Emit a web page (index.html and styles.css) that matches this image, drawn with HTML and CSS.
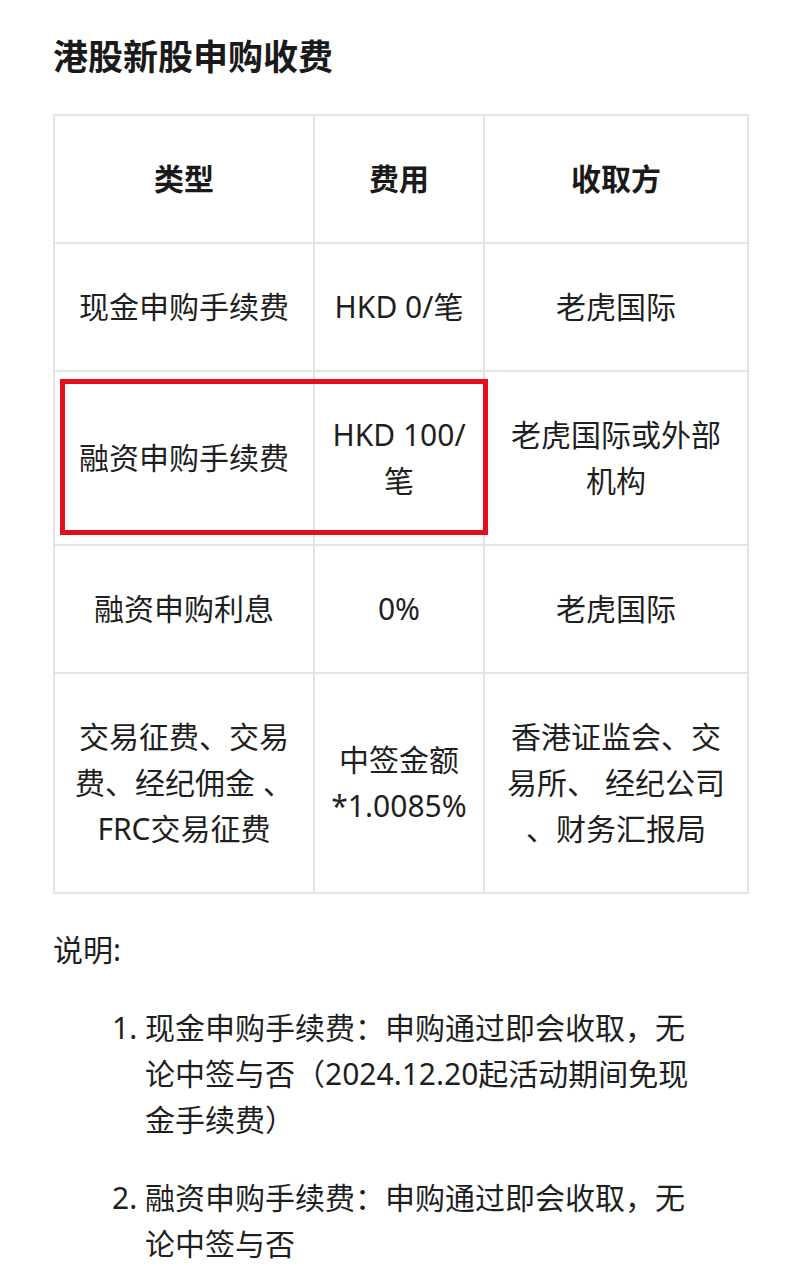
FILE: index.html
```html
<!DOCTYPE html>
<html lang="zh-CN">
<head>
  <meta charset="UTF-8">
  <meta name="viewport" content="width=device-width, initial-scale=1.0">
  <title>港股新股申购收费</title>
  <link rel="stylesheet" href="styles.css">
</head>
<body>
  <div class="page">
    <h1 class="title">港股新股申购收费</h1>

    <div class="table-wrap">
      <table class="fee-table">
        <colgroup>
          <col class="col-type">
          <col class="col-fee">
          <col class="col-payee">
        </colgroup>
        <thead>
          <tr>
            <th>类型</th>
            <th>费用</th>
            <th>收取方</th>
          </tr>
        </thead>
        <tbody>
          <tr>
            <td>现金申购手续费</td>
            <td>HKD 0/笔</td>
            <td>老虎国际</td>
          </tr>
          <tr>
            <td>融资申购手续费</td>
            <td>HKD 100/笔</td>
            <td>老虎国际或外部机构</td>
          </tr>
          <tr>
            <td>融资申购利息</td>
            <td>0%</td>
            <td>老虎国际</td>
          </tr>
          <tr>
            <td>交易征费、交易费、经纪佣金 、FRC交易征费</td>
            <td>中签金额 *1.0085%</td>
            <td class="wrap-any">香港证监会、交易所、 经纪公司 、财务汇报局</td>
          </tr>
        </tbody>
      </table>
      <!-- red annotation box drawn over the financing row -->
      <div class="highlight"></div>
    </div>

    <p class="note-title">说明:</p>
    <ol class="notes">
      <li>现金申购手续费：申购通过即会收取，无论中签与否（2024.12.20起活动期间免现金手续费）</li>
      <li>融资申购手续费：申购通过即会收取，无论中签与否</li>
    </ol>
  </div>
</body>
</html>
```

FILE: styles.css
```css
body {
  margin: 0;
  padding: 0;
  font-family: "Noto Sans", "Noto Sans CJK SC", sans-serif;
  background-color: #fff;
  color: #1f1f1f;
}

.page {
  padding: 34px 53px 0 53px;
}

.title {
  margin: 0;
  font-size: 35px;
  line-height: 46px;
  font-weight: bold;
  color: #1a1a1a;
}

.table-wrap {
  position: relative;
  margin-top: 34px;
}

.fee-table {
  width: 694px;
  border-collapse: collapse;
  table-layout: fixed;
  font-size: 30px;
  line-height: 46px;
}

.fee-table th,
.fee-table td {
  border: 2px solid #e4e4e4;
  padding: 40px 14px;
  text-align: center;
  vertical-align: middle;
}

.fee-table th {
  font-weight: bold;
  color: #1a1a1a;
}

.fee-table .wrap-any {
  line-break: anywhere;
}

.col-type {
  width: 260px;
}

.col-fee {
  width: 170px;
}

.col-payee {
  width: 264px;
}

.highlight {
  position: absolute;
  left: 7px;
  top: 265px;
  width: 418px;
  height: 146px;
  border: 5px solid #e3101c;
  pointer-events: none;
}

.note-title {
  margin: 33px 0 0 0;
  font-size: 30px;
  line-height: 46px;
}

.notes {
  margin: 32px 0 0 0;
  padding: 0 40px 0 92px;
  font-size: 30px;
  line-height: 46px;
}

.notes li {
  margin-bottom: 32px;
}
```
